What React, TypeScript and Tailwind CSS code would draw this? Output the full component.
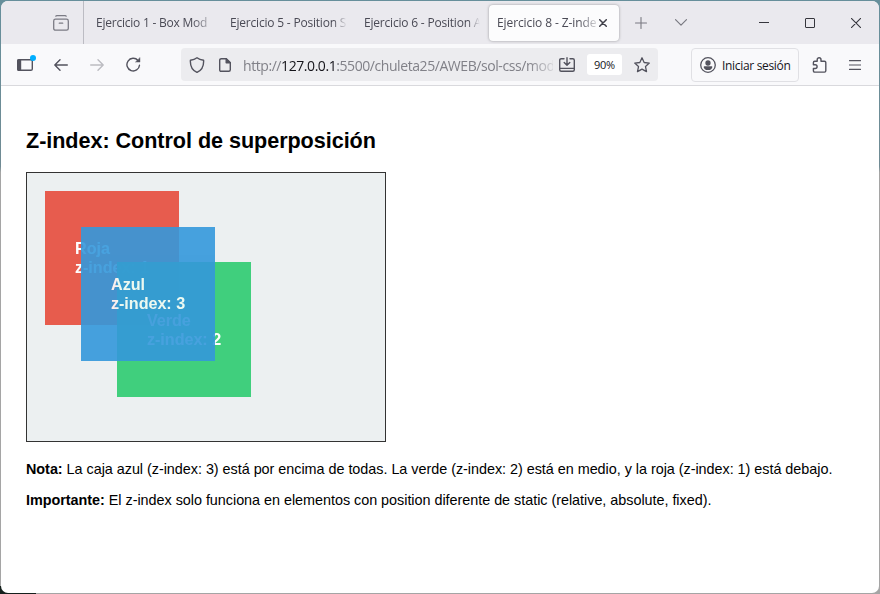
import React from 'react';

type BoxProps = { name: string; index: number; className: string };

function Box({ name, index, className }: BoxProps) {
  return (
    <div className={`absolute w-[134px] pl-[30px] text-[16.2px] leading-[19px] font-bold tracking-[-0.06px] whitespace-nowrap text-white opacity-90 ${className}`}>
      {name}
      <br />
      z-index: {index}
    </div>
  );
}

function Tab({ title, className }: { title: string; className: string }) {
  return (
    <div className={`shrink-0 overflow-hidden whitespace-nowrap ${className}`}>
      {title}
    </div>
  );
}

function Icon({ className, children, box = '0 0 16 16', weight = 1.3 }: { className: string; children: React.ReactNode; box?: string; weight?: number }) {
  return (
    <svg viewBox={box} className={`shrink-0 ${className}`} fill="none" stroke="currentColor" strokeWidth={weight} strokeLinecap="round" strokeLinejoin="round">
      {children}
    </svg>
  );
}

function TabStrip() {
  return (
    <div className="flex h-[43px] shrink-0 items-center bg-[#eae9ee] text-[12px] tracking-[-0.2px] text-[#4a4a55]">
      <Icon className="ml-[52px] h-4 w-4 text-[#7b7b84]">
        <rect x="0.7" y="4.2" width="14.6" height="11" rx="1.8" />
        <path d="M2.8 1.2Q3 0.7 4 0.7H12Q13 0.7 13.2 1.2M6.3 8.2h3.4" />
      </Icon>
      <div className="ml-[14px] h-full w-px bg-[#bcbcc3]" />
      <Tab title="Ejercicio 1 - Box Mod" className="ml-[12px] w-[112px] tracking-[-0.23px] [mask-image:linear-gradient(to_right,black_86%,transparent_108%)]" />
      <Tab title="Ejercicio 5 - Position S" className="ml-[22px] w-[116px] [mask-image:linear-gradient(to_right,black_89%,transparent_101%)]" />
      <Tab title="Ejercicio 6 - Position A" className="ml-[18px] w-[117px] [mask-image:linear-gradient(to_right,black_89%,transparent_99%)]" />
      <div className="ml-[8px] flex h-[36px] w-[130px] shrink-0 items-center rounded bg-[#fcfcfd] pl-[8px] shadow-[0_0_3px_rgba(0,0,0,0.35)]">
        <Tab title="Ejercicio 8 - Z-inde" className="w-[100px] tracking-[-0.1px] [mask-image:linear-gradient(to_right,black_82%,transparent_104%)]" />
        <Icon className="ml-[2px] h-[8px] w-[8px] text-[#3f3f49]" box="0 0 8 8" weight={1.5}>
          <path d="M.7 .7l6.6 6.6m0-6.6L.7 7.3" />
        </Icon>
      </div>
      <Icon className="ml-[16px] h-[12px] w-[12px] text-[#797981]" box="0 0 12 12" weight={1.1}>
        <path d="M6 .5v11M.5 6h11" />
      </Icon>
      <Icon className="ml-[28px] h-[7px] w-[12px] text-[#797981]" box="0 0 12 7" weight={1.2}>
        <path d="M.5 .7L6 6.2 11.5 .7" />
      </Icon>
      <div className="ml-[72px] h-px w-[10px] bg-[#36363d]" />
      <div className="ml-[36px] h-[10px] w-[10px] rounded-[1px] border border-[#36363d]" />
      <Icon className="ml-[36px] h-[10px] w-[10px] text-[#36363d]" box="0 0 10 10" weight={1.1}>
        <path d="M.3 .3l9.4 9.4m0-9.4L.3 9.7" />
      </Icon>
    </div>
  );
}

function Toolbar() {
  return (
    <div className="flex h-[42px] shrink-0 items-center border-b border-[#d9d9dd] bg-[#f9f9fb] text-[#53535e]">
      <div className="relative ml-[16px] shrink-0">
        <Icon className="h-[12px] w-[16px]" box="0 0 16 12" weight={1.4}>
          <rect x="0.7" y="0.7" width="14.6" height="10.6" rx="1.4" />
          <path d="M1 1h2.5v10H1z" fill="currentColor" />
        </Icon>
        <div className="absolute -top-[4px] left-[13px] h-[6px] w-[6px] rounded-full bg-[#00aeff]" />
      </div>
      <Icon className="ml-[21px] h-[12px] w-[14px]" box="0 0 14 12" weight={1.4}>
        <path d="M13.3 6H.8M6 .8L.8 6 6 11.2" />
      </Icon>
      <Icon className="ml-[22px] h-[12px] w-[14px] text-[#bcbcc1]" box="0 0 14 12" weight={1.4}>
        <path d="M.7 6h12.5M8 .8L13.2 6 8 11.2" />
      </Icon>
      <Icon className="ml-[22px] h-[15px] w-[15px]" box="0 0 15 15" weight={1.4}>
        <path d="M12 3.5A6.3 6.3 0 1 0 13.5 8.2" />
        <path d="M14 .8v4.3H9.7z" fill="currentColor" strokeWidth=".4" />
      </Icon>
      <div className="ml-[40px] flex h-[33px] w-[477px] shrink-0 items-center rounded bg-[#ececef]">
        <Icon className="ml-[8px] h-[16px] w-[16px]" weight={1.4}>
          <path d="M8 .8Q10.5 2.8 14.6 3.3C14.9 8.5 13 13.2 8 15.4 3 13.2 1.1 8.5 1.4 3.3Q5.5 2.8 8 .8z" />
        </Icon>
        <Icon className="ml-[14px] h-[14px] w-[12px]" box="0 0 12 14" weight={1.4}>
          <path d="M2.4 .7h4.8l4.1 4.1v7q0 1.5-1.5 1.5H2.2Q.7 13.3.7 11.8V2.2Q.7.7 2.4.7z" />
          <path d="M7.2 .7v4.1h4.1z" fill="currentColor" />
        </Icon>
        <div className="mt-[2px] ml-[12px] w-[310px] shrink-0 overflow-hidden text-[14px] tracking-[-0.43px] whitespace-nowrap text-[#818188] [mask-image:linear-gradient(to_right,black_92%,transparent_102%)]">
          http://<span className="text-[#15141a]">127.0.0.1</span>:5500/chuleta25/AWEB/sol-css/mod
        </div>
        <Icon className="ml-[6px] h-[16px] w-[16px]" weight={1.4}>
          <path d="M5 1.7H2.2Q.7 1.7.7 3.2v9.6q0 1.5 1.5 1.5h11.6q1.5 0 1.5-1.5V3.2q0-1.5-1.5-1.5H11M1 11.4h14M8 .7v7.4M5.2 5.6L8 8.3l2.8-2.7" />
        </Icon>
        <div className="ml-[12px] flex h-[21px] w-[35px] shrink-0 items-center justify-center rounded-[3px] bg-white pt-px text-[11px] tracking-[-0.3px] text-[#15141a]">90%</div>
        <Icon className="ml-[12px] h-[16px] w-[16px]" weight={1.3}>
          <path d="M8 .8l2.15 4.7 5.15.6-3.8 3.45 1 5.1L8 12.1l-4.5 2.55 1-5.1L.7 6.1l5.15-.6z" />
        </Icon>
      </div>
      <div className="ml-[33px] flex h-[34px] w-[108px] shrink-0 items-center rounded border border-[#e0e0e4]">
        <Icon className="ml-[8px] h-[16px] w-[16px]" weight={1.3}>
          <circle cx="8" cy="8" r="7.3" />
          <circle cx="8" cy="6" r="2" fill="currentColor" />
          <path d="M4.3 10h7.4Q11 12.4 8 12.4T4.3 10z" fill="currentColor" />
        </Icon>
        <span className="mt-[2px] ml-[6px] text-[12px] tracking-[-0.32px] whitespace-nowrap text-[#15141a]">Iniciar sesión</span>
      </div>
      <Icon className="ml-[13px] h-[16px] w-[15px]" box="0 0 15 16" weight={1.4}>
        <path d="M5.2 4.2V2.7a1.9 1.9 0 0 1 3.8 0v1.5h3.5q1.3 0 1.3 1.3v8.3q0 1.3-1.3 1.3H2.7q-1.3 0-1.3-1.3v-2.3h1.8a1.9 1.9 0 0 0 0-3.8H1.4V5.5q0-1.3 1.3-1.3z" />
      </Icon>
      <Icon className="ml-[22px] h-[10px] w-[12px]" box="0 0 12 10" weight={1.2}>
        <path d="M.5 .6h11M.5 5h11M.5 9.4h11" />
      </Icon>
    </div>
  );
}

export default function App() {
  return (
    <div className="h-[594px] w-[880px] overflow-hidden bg-[linear-gradient(to_right,#15201d_36px,transparent_36px),linear-gradient(to_bottom,#668f9b,#708b94_28%,#a5a5a5_29%,#a5a5a5)] bg-[length:100%_8px,100%_100%] bg-[position:bottom,center] bg-no-repeat p-px">
      <div className="flex h-[592px] w-[878px] flex-col overflow-hidden rounded-[7px] bg-white font-['Open_Sans','Noto_Sans',sans-serif]">
        <TabStrip />
        <Toolbar />
        <main className="flex flex-col pl-[25px] font-['Liberation_Sans',Arial,sans-serif] text-[14.4px] leading-[17px] tracking-[-0.03px] text-black">
          <h2 className="mt-[42px] text-[21.6px] leading-[25px] font-bold tracking-[-0.05px]">Z-index: Control de superposición</h2>
          <div className="relative mt-[19px] h-[270px] w-[360px] border border-[#333] bg-[#ecf0f1]">
            <Box name="Roja" index={1} className="top-[18px] left-[18px] z-1 h-[134px] bg-[#e74c3c] pt-[48px]" />
            <Box name="Verde" index={2} className="top-[89px] left-[90px] z-2 h-[135px] bg-[#2ecc71] pt-[49px]" />
            <Box name="Azul" index={3} className="top-[54px] left-[54px] z-3 h-[134px] bg-[#3498db] pt-[48px]" />
          </div>
          <p className="mt-[19px] whitespace-nowrap"><b>Nota:</b> La caja azul (z-index: 3) está por encima de todas. La verde (z-index: 2) está en medio, y la roja (z-index: 1) está debajo.</p>
          <p className="mt-[14px] whitespace-nowrap"><b>Importante:</b> El z-index solo funciona en elementos con position diferente de static (relative, absolute, fixed).</p>
        </main>
      </div>
    </div>
  );
}
